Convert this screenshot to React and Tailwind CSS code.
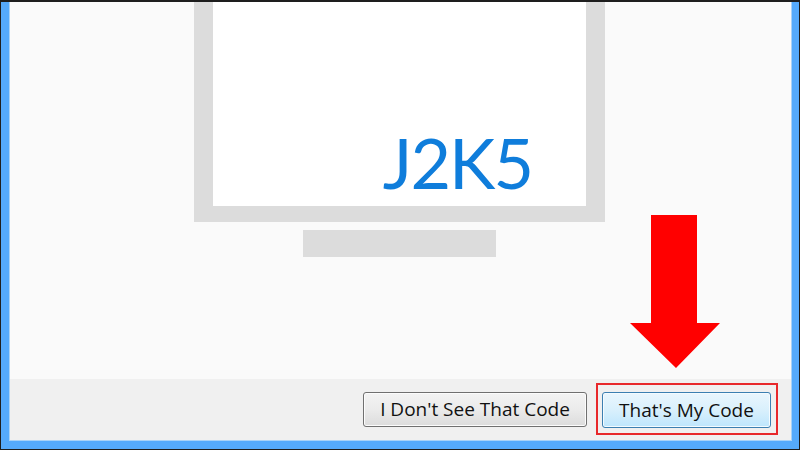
export default function App() {
  return (
    <div className="relative w-[800px] h-[450px] bg-[#1e1e1e] pt-[2px] px-[1px] pb-[1px] overflow-hidden" style={{ fontFamily: '"Open Sans", "Noto Sans", sans-serif' }}>
      <div className="w-full h-full bg-[#55aafc] pl-[8px] pr-[7px] pb-[8px]">
        <div className="w-full h-full border-x border-b border-[#a9d2f7] flex flex-col">
          <div className="flex-1 bg-[#fafafa] flex flex-col">
            <div className="ml-[184px] w-[411px] bg-[#dcdcdc] px-[19px] pb-[16px]">
              <div className="h-[204px] bg-white flex justify-end items-end pr-[54px]">
                <span className="text-[70px] leading-none text-[#0f7ddb] font-normal tracking-[-2px] mb-[9px]" style={{ fontFamily: 'Lato, sans-serif' }}>J2K5</span>
              </div>
            </div>
            <div className="ml-[293px] mt-[8px] w-[193px] h-[27px] bg-[#dcdcdc]"></div>
          </div>
          <div className="h-[61px] bg-[#f0f0f0] flex justify-end items-start pt-[13px] pr-[20px] gap-[15px]">
            <button className="w-[224px] h-[35px] rounded-[3px] border border-[#707070] bg-gradient-to-b from-[#f3f3f3] via-[#ebebeb] to-[#dcdcdc] text-[19px] text-[#111] flex items-center justify-center shadow-[inset_0_0_0_1px_#fcfcfc]">
              I Don't See That Code
            </button>
            <div className="relative">
              <button className="w-[169px] h-[36px] rounded-[3px] border border-[#3c7fb1] bg-gradient-to-b from-[#eaf6fd] via-[#d9f0fc] to-[#bee6fd] text-[19px] text-[#111] flex items-center justify-center shadow-[inset_0_0_0_1px_#f4fbff]">
                That's My Code
              </button>
              <div className="absolute -left-[6px] -right-[7px] -top-[9px] -bottom-[7px] border-2 border-[#e8282b]"></div>
            </div>
          </div>
        </div>
      </div>
      <svg className="absolute left-0 top-0" width="800" height="450" viewBox="0 0 800 450">
        <polygon points="651,215 697,215 697,323 720,323 676,368 630,323 651,323" fill="#ff0000" />
      </svg>
    </div>
  );
}
